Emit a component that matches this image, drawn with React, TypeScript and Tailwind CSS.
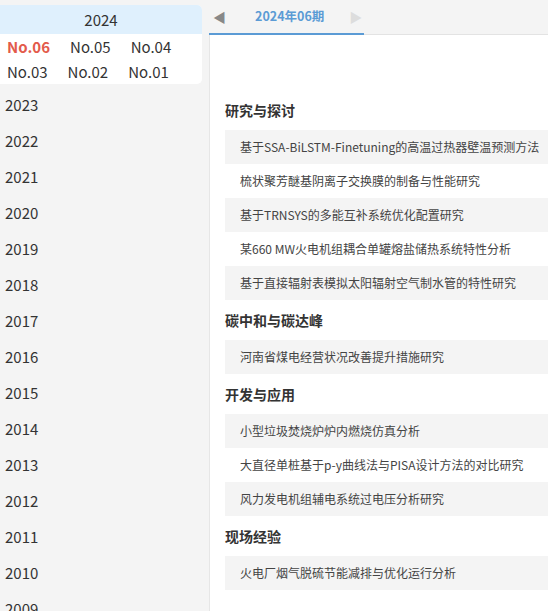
import React from "react";

const years = [
  "2023", "2022", "2021", "2020", "2019", "2018", "2017", "2016",
  "2015", "2014", "2013", "2012", "2011", "2010", "2009", "2008",
];

const sections: { title: string; items: string[] }[] = [
  {
    title: "研究与探讨",
    items: [
      "基于SSA-BiLSTM-Finetuning的高温过热器壁温预测方法",
      "梳状聚芳醚基阴离子交换膜的制备与性能研究",
      "基于TRNSYS的多能互补系统优化配置研究",
      "某660 MW火电机组耦合单罐熔盐储热系统特性分析",
      "基于直接辐射表模拟太阳辐射空气制水管的特性研究",
    ],
  },
  { title: "碳中和与碳达峰", items: ["河南省煤电经营状况改善提升措施研究"] },
  {
    title: "开发与应用",
    items: [
      "小型垃圾焚烧炉炉内燃烧仿真分析",
      "大直径单桩基于p-y曲线法与PISA设计方法的对比研究",
      "风力发电机组辅电系统过电压分析研究",
    ],
  },
  { title: "现场经验", items: ["火电厂烟气脱硫节能减排与优化运行分析"] },
];

export default function App() {
  return (
    <div
      className="flex h-[611px] w-[548px] overflow-hidden bg-[#f4f4f4] text-[#333]"
      style={{ fontFamily: '"Noto Sans CJK SC", "Noto Sans", sans-serif' }}
    >
      <div className="w-[209px] shrink-0">
        <div className="mt-[5px] w-[202px] overflow-hidden rounded-r-[5px] bg-white">
          <div className="h-[29px] bg-[#dff0fd] text-center text-[15px] leading-[29px] text-[#333]">
            2024
          </div>
          <div className="px-[7px] text-[15px] leading-[25px]">
            <div className="flex">
              <span className="mr-[20px] font-bold text-[#e35a4b]">No.06</span>
              <span className="mr-[20px]">No.05</span>
              <span className="mr-[20px]">No.04</span>
            </div>
            <div className="flex">
              <span className="mr-[20px]">No.03</span>
              <span className="mr-[20px]">No.02</span>
              <span className="mr-[20px]">No.01</span>
            </div>
          </div>
        </div>
        <div className="mt-[3px]">
          {years.map((y) => (
            <div key={y} className="h-[36px] pl-[5px] text-[15px] leading-[36px] text-[#333]">
              {y}
            </div>
          ))}
        </div>
      </div>
      <div className="flex min-w-0 flex-1 flex-col">
        <div className="flex h-[35px] shrink-0 border-b border-[#e3e3e3]">
          <div className="flex h-[35px] w-[155px] items-center border-b-2 border-[#5b9bd5]">
            <span className="ml-[4px] text-[13px] text-[#888]">◀</span>
            <span className="ml-[29px] text-[12.5px] font-bold text-[#5b9bd5]">2024年06期</span>
            <span className="ml-[25px] text-[13px] text-[#ddd]">▶</span>
          </div>
        </div>
        <div className="flex-1 border-l border-[#e6e6e6] bg-white pl-[15px] pt-[55px]">
          {sections.map((s) => (
            <div key={s.title}>
              <div className="h-[40px] text-[14px] font-bold leading-[40px] text-[#333]">
                {s.title}
              </div>
              {s.items.map((it, i) => (
                <div
                  key={it}
                  className={`h-[34px] whitespace-nowrap pl-[15px] text-[12px] leading-[34px] text-[#444] ${
                    i % 2 === 0 ? "bg-[#f4f4f4]" : "bg-white"
                  }`}
                >
                  {it}
                </div>
              ))}
            </div>
          ))}
        </div>
      </div>
    </div>
  );
}
